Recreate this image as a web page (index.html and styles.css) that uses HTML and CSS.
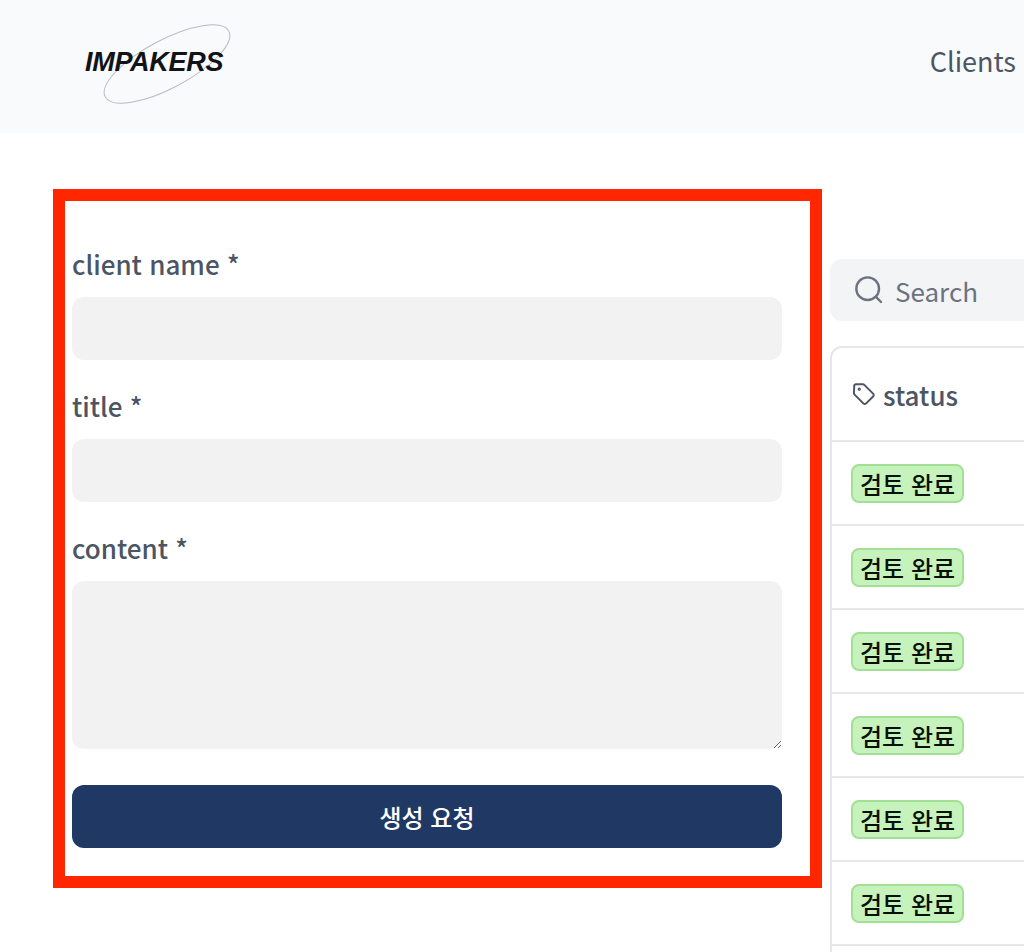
FILE: index.html
```html
<!DOCTYPE html>
<html lang="ko">
<head>
<meta charset="utf-8">
<title>Impakers</title>
<link rel="stylesheet" href="styles.css">
</head>
<body>
<header class="topbar">
  <a class="logo" href="#">
    <svg class="logo-ring" width="140" height="90" viewBox="0 0 140 90" aria-hidden="true">
      <ellipse cx="70" cy="45" rx="70" ry="24" transform="rotate(-28 70 45)" fill="none" stroke="#b9bbc0" stroke-width="1"/>
    </svg>
    <span class="logo-text">IMPAKERS</span>
  </a>
  <nav class="nav"><a href="#">Clients</a></nav>
</header>
<main class="page">
  <form class="panel">
    <div class="field">
      <label class="label">client name *</label>
      <input class="control" type="text">
    </div>
    <div class="field">
      <label class="label">title *</label>
      <input class="control" type="text">
    </div>
    <div class="field">
      <label class="label">content *</label>
      <textarea class="control area"></textarea>
    </div>
    <button class="submit" type="button">생성 요청</button>
  </form>
  <section class="list">
    <div class="search">
      <svg width="32" height="32" viewBox="0 0 24 24" fill="none" stroke="#6b7280" stroke-width="1.8" stroke-linecap="round" stroke-linejoin="round" aria-hidden="true"><circle cx="11" cy="11" r="8.5"/><path d="m21 21-3.6-3.6"/></svg>
      <span class="search-text">Search</span>
    </div>
    <div class="table">
      <div class="head">
        <svg width="26" height="26" viewBox="0 0 24 24" fill="none" stroke="#4b5563" stroke-width="1.8" stroke-linecap="round" stroke-linejoin="round" aria-hidden="true"><path d="M3 4.5A1.5 1.5 0 0 1 4.5 3h6.4a2 2 0 0 1 1.4.6l8.1 8.1a1.8 1.8 0 0 1 0 2.6l-6.4 6.4a1.8 1.8 0 0 1-2.6 0l-8.1-8.1a2 2 0 0 1-.6-1.4z"/><circle cx="7.6" cy="7.6" r=".6"/></svg>
        <span>status</span>
      </div>
      <div class="row"><span class="badge">검토 완료</span></div>
      <div class="row"><span class="badge">검토 완료</span></div>
      <div class="row"><span class="badge">검토 완료</span></div>
      <div class="row"><span class="badge">검토 완료</span></div>
      <div class="row"><span class="badge">검토 완료</span></div>
      <div class="row"><span class="badge">검토 완료</span></div>
      <div class="row"></div>
    </div>
  </section>
</main>
</body>
</html>
```
FILE: styles.css
```css
* { box-sizing: border-box; }
html, body { margin: 0; height: 952px; overflow: hidden; background: #fff; }
body { font-family: "Noto Sans CJK KR", "Noto Sans", sans-serif; color: #4b5563; }

.topbar { height: 133px; background: #f9fafb; display: flex; align-items: center; justify-content: space-between; padding: 0 8px 13px 85px; }
.logo { position: relative; display: block; text-decoration: none; line-height: 1; margin-top: 5px; }
.logo-ring { position: absolute; left: 12px; top: -30px; }
.logo-text { position: relative; font-family: "Liberation Sans", Arial, sans-serif; font-weight: 700; font-style: italic; font-size: 27px; letter-spacing: -0.3px; color: #111317; }
.nav a { color: #4b5563; text-decoration: none; font-size: 27px; font-weight: 400; }

.page { display: flex; align-items: flex-start; padding: 56px 0 0 53px; width: 1500px; }
.panel { flex: none; width: 769px; border: 12px solid #ff2600; padding: 45px 28px 28px 7px; }
.field { margin-bottom: 28px; }
.label { display: block; font-size: 26px; line-height: 36px; font-weight: 500; margin-bottom: 15px; }
.control { display: block; width: 100%; height: 63px; border: 0; border-radius: 12px; background: #f2f2f2; }
.area { height: 168px; resize: vertical; }
.submit { display: block; width: 100%; height: 63px; margin-top: 36px; border: 0; border-radius: 12px; background: #1f3864; color: #fff; font-family: inherit; font-size: 24px; font-weight: 500; }

.list { flex: none; width: 600px; margin: 70px 0 0 8px; }
.search { display: flex; align-items: center; gap: 10px; height: 62px; padding-left: 23px; background: #f3f4f6; border-radius: 12px; }
.search-text { font-size: 26px; color: #6b7280; }
.table { margin-top: 25px; border: 2px solid #e5e7eb; border-radius: 12px 12px 0 0; }
.head { display: flex; align-items: center; gap: 6px; height: 94px; padding-left: 19px; border-bottom: 2px solid #e5e7eb; font-size: 26px; font-weight: 500; }
.row { display: flex; align-items: center; height: 84px; padding-left: 19px; border-bottom: 2px solid #e5e7eb; }
.badge { display: block; padding: 0 7px; height: 39px; line-height: 35px; border: 2px solid #a3df94; border-radius: 8px; background: #c6f3bb; color: #0b0f0a; font-size: 24px; font-weight: 500; }
```
